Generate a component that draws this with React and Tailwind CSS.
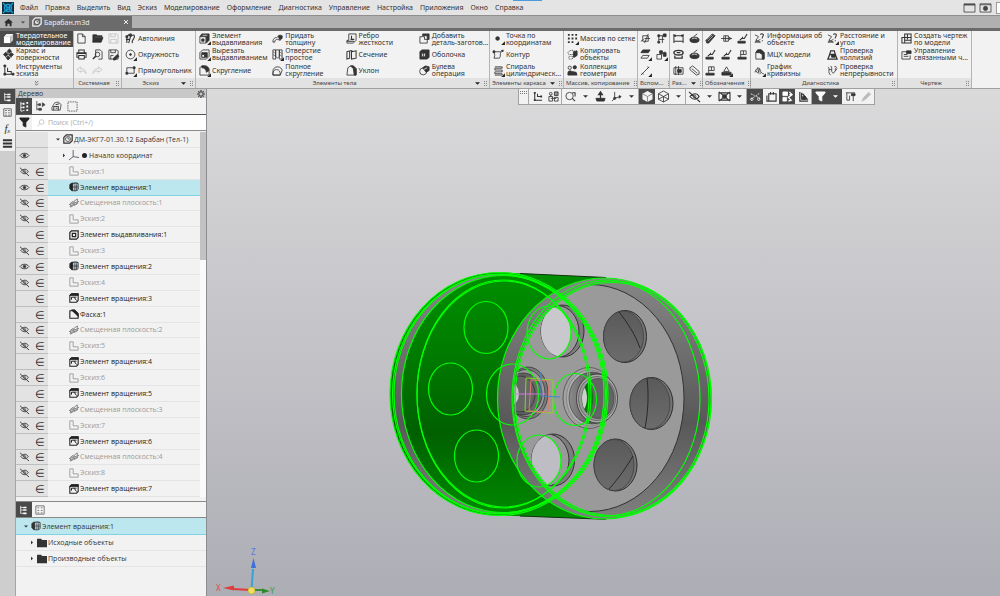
import { useState } from "react";

const glyphs = {
  solidLight: <><path d="M1 4h7v7H1z" fill="#fff" stroke="none" /><path d="M1 4l3-3h7v7l-3 3V4z" fill="#c8c8c8" stroke="none" /><path d="M1 4l3-3h7L8 4z" fill="#f0f0f0" stroke="none" /></>,
  surface: <><path d="M7 0l2.300 2.300L7 4.600 4.700 2.300zM3 3.500l2.500 2.500L3 8.500.5 6z" fill="currentColor" /><path d="M9 4l2.500 2L9 8.500 6.500 6zM5.500 7.500L8 9.500 5.500 12 3.500 9.500z" fill="currentColor" /><path d="M4 3l5 6" /></>,
  sketchTools: <><path d="M2 1v9h9M5 3v4h4v3" strokeWidth="1.100" /><path d="M1 0h2v2H1zM1 9h2v2H1zM10 9h2v2h-2z" fill="currentColor" /></>,
  file: <path d="M2 1h5l3 3v7H2zM7 1v3h3" />,
  folderOpen: <path d="M1 10V2h4l1 1h5v1H3L1 10l2-5h9l-2 5z" fill="currentColor" />,
  save: <path d="M1 1h9l1 1v9H1zM3 1v3h5V1M3 11V7h6v4" />,
  saveAs: <><path d="M1 1h9l1 1v9H1zM3 1v3h5V1M3 11V7h3" /><path d="M6 10l4-4 2 2-4 4H6z" fill="currentColor" /></>,
  print: <path d="M3 4V1h6v3M3 9H1V4h10v5H9M3 7h6v4H3zM1 5h10" strokeWidth="1.100" />,
  preview: <><path d="M4 9V1h5l2 2v8H7" /><circle cx="6" cy="6" r="2.500" /><path d="M4 8l-3 3" strokeWidth="1.600" /></>,
  undo: <path d="M5 2L1 5l4 3V6.500c3 0 5 .5 6 3C11 6 9 4 5 4z" />,
  redo: <path d="M7 2l4 3-4 3V6.500c-3 0-5 .5-6 3C1 6 3 4 7 4z" />,
  autoline: <><path d="M2 11V4l2-2 2 2-2 7M6 4c3-3 5-2 4 1s-3 3-2 6M1 7h4" strokeWidth="1.200" /><path d="M1 3h2v2H1zM5 1h2v2H5z" fill="currentColor" /></>,
  circle: <><circle cx="6" cy="6" r="4.800" /><circle cx="6" cy="6" r="1" fill="currentColor" /></>,
  rect: <><path d="M2 3h8v6H2z" /><path d="M1 8h2v2H1zM9 2h2v2H9z" fill="currentColor" /></>,
  extrude: <><path d="M1 4l2-3h8v7l-3 3V4z" fill="currentColor" /><path d="M1 4h6.500v7H1z" fill="#f4f4f4" /><path d="M3 6.500h2.500V9H3z" fill="currentColor" /><path d="M4 2.500h5" stroke="#ddd" /></>,
  cut: <><path d="M1 4l3-3h7v7l-3 3H1z" /><path d="M3 4h6v5H3z" fill="currentColor" /><path d="M3 6h3v3H3z" fill="#f4f4f4" /></>,
  fillet: <><path d="M1 11V3l2-2h3c3 0 5 2 5 5v5z" /><path d="M3 1h3c3 0 5 2 5 5l-3 2c0-3-2-5-5-5z" fill="currentColor" /></>,
  thicken: <><path d="M1 10c0-4 2-5 4-5l4-3 2 2-2 4-3-1c-2 0-3 1-3 3z" /><path d="M7 3h4v3L8 7z" fill="currentColor" /></>,
  hole: <><path d="M1 1h3v10H1zM8 1h3v10H8zM4 1h4v7l-2 2-2-2z" /><path d="M1 3l3 2M1 6l3 2M8 3l3 2M8 6l3 2" strokeWidth="0.600" /></>,
  fullFillet: <path d="M1 11V7c0-3 2-5 5-5 3 0 5 2 5 4l-2 5zM1 11c0-4 1-6 4-6s4 2 4 6z" />,
  rib: <><path d="M3 1h8v7l-3 3H1V8h2z" /><path d="M6 3v4M5 7h4M1 9h8" strokeWidth="1.200" /></>,
  section: <><path d="M1 3l3-1v8l-3 1zM6 3l5-1v8l-5 1zM4 2h3" strokeWidth="1.100" /></>,
  draft: <><path d="M1 11l1-8 3-2h3l3 3v7z" /><path d="M5 1h3l3 3v7H9L8 4z" fill="currentColor" /></>,
  addPart: <><path d="M1 4h5v3h3v4H1z" /><path d="M4 1h7v6H9V3H4z" fill="currentColor" /></>,
  shell: <><path d="M1 3l2-2h8v8l-2 2H1z" fill="currentColor" /><path d="M3 4.500h4v4H3z" fill="#f4f4f4" /><path d="M5 4.500v4" /></>,
  boolean: <><circle cx="4.500" cy="7" r="3.800" /><path d="M4 3l3-2 4 1v4L8 8 6 6z" fill="currentColor" /><path d="M5 5l4-2" stroke="#eee" /></>,
  point: <circle cx="5" cy="6" r="2" fill="currentColor" />,
  contour: <><path d="M1 3h8c-2 2 0 5-2 7H1l1-3z" /><path d="M0 2h2v2H0zM9 2l2-1v2z" fill="currentColor" /></>,
  spiral: <path d="M2 2h8v1.500H2v2h8v2H2v2h8V11H2" />,
  grid: <path d="M1 1h2v2H1zM5 1h2v2H5zM9 1h2v2H9zM1 5h2v2H1zM5 5h2v2H5zM1 9h2v2H1zM5 9h2v2H5zM9 5h2v2H9z" fill="currentColor" stroke="none" />,
  copy: <><path d="M1 4c2-3 5-3 7-2v4H2z" strokeDasharray="1.500 1" /><path d="M7 3l4-1v5l-3 2H7z" fill="currentColor" /><path d="M2 8h4v3H2z" strokeDasharray="1 1" /></>,
  collection: <><circle cx="3" cy="3" r="1.800" /><circle cx="8.500" cy="2.500" r="1.800" fill="currentColor" /><path d="M1 9c0-3 3-3 4-2l5 1 1 3H1z" fill="currentColor" /></>,
  plane: <path d="M3 9V3h6v6zM1 9l3-2M5 11L9 1M5 6h6" />,
  axes: <><path d="M3 11V3h7M3 7h6M7 3v8" /><path d="M8 1h3v3H8zM2 2h2v2H2zM2 9h2v2H2z" fill="currentColor" /></>,
  offset: <><path d="M3 7h7l-2 3H1z" /><path d="M3 1h8L9 4H1z" fill="currentColor" /></>,
  lcs: <><path d="M1 9V6h5v5H1zM6 6l4-3" /><path d="M4 2h3v3H4zM8 4h3v4H8z" fill="currentColor" /></>,
  line: <path d="M1 11L10 2M2 9l2 1M8 2l2 1" />,
  dim: <path d="M1 1v10M11 1v10M1 3h10M1 9h10M3 2l-2 1 2 1M9 2l2 1-2 1" strokeWidth="1.100" />,
  dimRound: <><ellipse cx="6" cy="4" rx="5" ry="2.500" strokeWidth="1.600" /><path d="M2 7v3h8V7M4 4h4" strokeWidth="1.400" /></>,
  dimFrame: <><path d="M3 1v10M6 1v10M1 3h10v7H1z" /><path d="M5 5h4v3H5z" fill="currentColor" /></>,
  disc: <><ellipse cx="6" cy="7.500" rx="5" ry="3" fill="currentColor" /><path d="M3 6.500c2-1 4-1 6 0" stroke="#ddd" /><path d="M5 4l4-3" /></>,
  tube: <path d="M1 3l3-2 7 6v3l-3 1-7-6zM3 4l6 5" />,
  thread: <><path d="M1 8l7-7 3 2-7 8H2z" fill="currentColor" /><path d="M3 9l6-6M2 7l6-5" stroke="#ddd" strokeWidth="0.700" /></>,
  shaft: <path d="M0 6h12M3 3h5v6H3zM8 4l3 2-3 2M5 3v6" />,
  base: <><path d="M1 9h8v2H1z" fill="currentColor" /><path d="M3 8l2-2h3l3-5M6 6V4" strokeWidth="1.200" /></>,
  base2: <><path d="M1 9h9v2H1z" fill="currentColor" /><path d="M4 9V2h6v4H4M7 2v4" /></>,
  base3: <><path d="M1 8h10v3H1z" fill="currentColor" /><path d="M3 7l3-5 3 5z" /></>,
  info: <><path d="M1 2l4 2-3 4 5 2H1l6-3" /><path d="M7 2c1-2 4-1 3 1L9 5v1M9 8v1" strokeWidth="1.100" /></>,
  mass: <><path d="M2 11V4l2-3h4l3 3v7z" /><path d="M2 4l2-3h4l3 3v7H9V6L6 4z" fill="currentColor" /></>,
  curvature: <path d="M1 8c2-6 5-6 6-2s3 3 4 4M2 6l2 3M4 3l1 5M6 4L5 9M8 8l-2 2" />,
  collision: <><path d="M4 2h4l1 4H3z" strokeWidth="1.300" /><path d="M1 11l2-5h6l2 5z" strokeWidth="1.400" /><path d="M5 6h4v3H5z" fill="currentColor" /></>,
  continuity: <><path d="M1 2c3 2-1 6 3 9M4 1c3 3-1 6 3 8l4-5M2 5h3" /><path d="M8 2c1-1 3 0 2 1L9 5v1" /></>,
  drawing: <path d="M1 5h3V1h7v10H1zM4 5h7M4 5v6M7 1v6M4 8h7" strokeWidth="1.100" />,
  drawings: <><path d="M1 3h5M1 3v8h9V7M3 6h4M3 8h5" /><path d="M6 2h5v3H6z" fill="currentColor" /></>,
  tree: <><path d="M2 1v9M2 3h3M2 6h3M2 10h3" /><path d="M5 2h4v2H5zM5 5h4v2H5zM5 9h4v2H5z" fill="currentColor" stroke="none" /></>,
  treeDots: <><path d="M2 1v10M2 3h2M2 7h2M2 11h2" /><path d="M4 2h2v2H4zM4 6h2v2H4zM8 1h2v2H8zM8 5h2v2H8zM8 9h2v2H8zM4 10h2v1H4z" fill="currentColor" stroke="none" /></>,
  treeArrow: <><path d="M2 0v10M2 4h2M2 9h2" /><path d="M4 3h2v2H4zM4 8h3v2H4zM8 2l3 2-3 2z" fill="currentColor" /></>,
  bodies: <><path d="M1 7l3-5 4-1 3 3-1 6H1z" /><path d="M5 4l4-1M3 10V6h5v4M5 8h2" strokeWidth="1.100" /></>,
  dashed: <path d="M1 1h10v10H1z" strokeDasharray="1.500 1" />,
  params: <><path d="M1 1h10v10H1z" /><path d="M3 3h2v1H3zM7 3h2v1H7zM3 6h2v1H3zM7 6h2v1H7zM3 9h2v1H3zM7 9h2v1H7z" fill="currentColor" stroke="none" /></>,
  list: <path d="M1 2.500h10M1 6h10M1 9.500h10" strokeWidth="2.200" />,
  funnel: <path d="M1 1h10v1L7.500 6v5l-3-1.500V6L1 2z" fill="currentColor" />,
  search: <path d="M7 1a3.500 3.500 0 1 1-.1 7 3.500 3.500 0 1 1 .1-7zM4 7l-3 4" />,
  gear: <><circle cx="6" cy="6" r="3.300" strokeWidth="1.500" /><path d="M6 0v2M6 10v2M0 6h2M10 6h2M2 2l1.300 1.300M8.700 8.700L10 10M2 10l1.300-1.300M8.700 3.300L10 2" strokeWidth="1.800" /></>,
  part: <><path d="M1 4l3-3h7v7l-3 3H1z" strokeWidth="1.500" /><circle cx="6" cy="6" r="3" fill="#f4f4f4" stroke="#333" /><path d="M6 4v2h2" stroke="#333" /></>,
  origin: <path d="M5 0v8l7 1M5 8l-5 4" stroke="#3d3346" />,
  sketch: <path d="M1 1h4v6h6v4H1z" />,
  revolve: <><path d="M4 2c2-1 6-1 7 0v7c-1 2-5 2-7 1z" fill="#a9c3d2" /><path d="M1 3l3-2v10L1 8z" fill="currentColor" /><path d="M4 2c2-1 5-1 7 0M7 3v8M9 3v7M4 6h7" strokeWidth="0.700" /></>,
  cutRevolve: <><path d="M1 3l2-2h8v8l-2 2H1z" strokeWidth="1.300" /><path d="M1 3l2-2h8v2z" fill="currentColor" /><path d="M3 8V5h3l3 4M6 5h3" strokeWidth="1.200" /></>,
  cutExtrude: <><path d="M1 3l2-2h8v8l-2 2H1z" strokeWidth="1.400" /><path d="M4 4h4v4H4z" strokeWidth="1.500" /></>,
  chamfer: <><path d="M1 11V2h3l7 5v4z" strokeWidth="1.300" /><path d="M3 1h4l4 4v4z" fill="currentColor" /></>,
  offsetPlane: <path d="M2 11V6l3-2v5zM6 9V4l4-3v6zM0 8l12-4M1 10l10-4" strokeWidth="1.200" />,
  folder: <path d="M0 1h5l1 1.500h6V11H0z" fill="currentColor" stroke="none" />,
  eye: <><path d="M0 6c3-4 9-4 12 0-3 4-9 4-12 0z" strokeWidth="1.200" /><circle cx="6" cy="6" r="1.700" fill="currentColor" /></>,
  eyeOff: <><path d="M1 6c3-4 8-4 10 0-2 4-7 4-10 0zM0 1l12 11" strokeWidth="1.200" /><circle cx="6" cy="6" r="1.500" /></>,
  home: <path d="M0 6l6-5 6 5H10v5H7.500V7.500h-3V11H2V6z" fill="currentColor" stroke="none" />,
  window: <><path d="M0 2h12v9H0z" /><path d="M0 3h12" strokeWidth="1.500" /></>,
  windowGear: <><path d="M0 2h12v9H0zM0 3h12" /><circle cx="6" cy="7" r="2.300" fill="currentColor" /></>,
  axis: <><path d="M3 1v9h8M6 3v3h4" strokeWidth="1.100" /><path d="M2 1h2v2H2zM2 9h2v2H2zM9 5h2v2H9z" fill="currentColor" stroke="none" /></>,
  blocks: <><path d="M1 6h4v5H1zM7 7h4v4H7zM3 8h6M3 4v2" /><path d="M7 1h4v4H7z" fill="currentColor" fillOpacity="0.5" /><circle cx="3" cy="3" r="1.500" /></>,
  zoomRect: <><circle cx="5" cy="5.500" r="4" /><path d="M8 8l3 3M8 2h3v4" strokeWidth="1.100" /></>,
  orient: <><path d="M1 8h10l-1 3H2z" fill="currentColor" /><path d="M6 8V2M4 4l2-3 2 3z" strokeWidth="1.400" /></>,
  triad: <><path d="M4 1v7l-3 3M4 8l6-2" /><circle cx="4" cy="8" r="1.200" fill="currentColor" /><path d="M9 5l2 1-2 2z" fill="currentColor" /></>,
  cube: <><path d="M6 0l5.500 3v6L6 12 .5 9V3z" fill="#f2f2f2" stroke="none" /><path d="M.5 3L6 6l5.500-3M6 6v6" stroke="#777" /></>,
  cubeWire: <path d="M6 0l5.500 3v6L6 12 .5 9V3zM.5 3L6 6l5.500-3M6 6v6M.5 9L6 6l5.500 3" />,
  cameraOff: <><path d="M0 2h12v8H0zM0 1l12 10M12 1L0 11" strokeWidth="1.200" /><circle cx="6" cy="6" r="2.200" fill="currentColor" /></>,
  cutLine: <><path d="M1 3l4 2M7 6l4 2M1 9l10-7" strokeDasharray="2 1" /><circle cx="2" cy="9" r="1.300" /><circle cx="9.500" cy="9" r="1.300" /></>,
  boxes: <path d="M3 3h8v8H3zM1 5v6h2M5 1v3M8 1v3M5 3h3" strokeWidth="1.200" />,
  repaint: <><path d="M1 1h5v4H1zM1 7h4v4H1z" fill="currentColor" /><path d="M8 1l3 3-4 3 3 3-3 1M8 4h3" strokeWidth="1.400" /></>,
  measure: <><path d="M2 1v10h9M4 2v7h6L5 3" strokeWidth="1.300" /><path d="M5 6h3v3H5z" fill="currentColor" /></>,
  caliper: <><path d="M1 2h10M2 2v8h3V5M9 4v7" /><path d="M7 3h4v2H7z" fill="currentColor" /></>,
  brush: <path d="M1 11l2-4 5-5 2 2-5 5zM8 1l3 3" fill="currentColor" />,
};

function Icon({ name, className = "size-[11px]", more }) {
  return (
    <svg viewBox="0 0 12 12" className={`shrink-0 overflow-visible ${className}`} fill="none" stroke="currentColor" strokeWidth="0.900" aria-hidden="true">
      {glyphs[name]}
      {more ? <path d="M13 9v4H9z" fill="#222" stroke="none" /> : null}
    </svg>
  );
}

function Caret({ className = "w-[5px]" }) {
  return (
    <svg viewBox="0 0 6 3" className={`h-[3px] shrink-0 ${className}`} aria-hidden="true">
      <path d="M0 0h6L3 3z" fill="currentColor" />
    </svg>
  );
}

const menuItems = ["Файл", "Правка", "Выделить", "Вид", "Эскиз", "Моделирование", "Оформление", "Диагностика", "Управление", "Настройка", "Приложения", "Окно", "Справка"];

const modes = [
  { icon: "solidLight", lines: ["Твердотельное", "моделирование"], active: true },
  { icon: "surface", lines: ["Каркас и", "поверхности"] },
  { icon: "sketchTools", lines: ["Инструменты", "эскиза"] },
];

// columns are filled top to bottom, three commands each
const ribbonGroups = [
  {
    title: "Системная",
    cols: "grid-cols-3",
    small: true,
    items: ["file", "print", "undo", "folderOpen", "preview", "redo", "save", "saveAs"],
    dim: ["undo", "redo", "save"],
  },
  {
    title: "Эскиз",
    caret: true,
    cols: "grid-cols-1",
    items: [
      { icon: "autoline", lines: ["Автолиния"] },
      { icon: "circle", lines: ["Окружность"], more: true },
      { icon: "rect", lines: ["Прямоугольник"], more: true },
    ],
  },
  {
    title: "Элементы тела",
    caret: true,
    cols: "grid-cols-4",
    items: [
      { icon: "extrude", lines: ["Элемент", "выдавливания"], more: true },
      { icon: "cut", lines: ["Вырезать", "выдавливанием"], more: true },
      { icon: "fillet", lines: ["Скругление"], more: true },
      { icon: "thicken", lines: ["Придать", "толщину"] },
      { icon: "hole", lines: ["Отверстие", "простое"], more: true },
      { icon: "fullFillet", lines: ["Полное", "скругление"] },
      { icon: "rib", lines: ["Ребро", "жесткости"] },
      { icon: "section", lines: ["Сечение"] },
      { icon: "draft", lines: ["Уклон"] },
      { icon: "addPart", lines: ["Добавить", "деталь-заготов..."] },
      { icon: "shell", lines: ["Оболочка"] },
      { icon: "boolean", lines: ["Булева", "операция"] },
    ],
  },
  {
    title: "Элементы каркаса",
    caret: true,
    cols: "grid-cols-1",
    items: [
      { icon: "point", lines: ["Точка по", "координатам"], more: true },
      { icon: "contour", lines: ["Контур"] },
      { icon: "spiral", lines: ["Спираль", "цилиндрическ..."], more: true },
    ],
  },
  {
    title: "Массив, копирование",
    cols: "grid-cols-1",
    items: [
      { icon: "grid", lines: ["Массив по сетке"], more: true },
      { icon: "copy", lines: ["Копировать", "объекты"] },
      { icon: "collection", lines: ["Коллекция", "геометрии"] },
    ],
  },
  { title: "Вспом...", cols: "grid-cols-2", small: true, items: ["plane", "offset", "line", "axes", "lcs"], dim: [], more: ["offset", "line", "lcs"] },
  { title: "Раз...", caret: true, cols: "grid-cols-2", small: true, items: ["dim", "dimRound", "dimFrame", "disc", "disc", "tube"], dim: [] },
  {
    title: "Обозначения",
    cols: "grid-cols-3",
    small: true,
    items: ["thread", "base", "base2", "shaft", "base", "base3", "base", "base2"],
    dim: [],
    more: ["base3"],
  },
  {
    title: "Диагностика",
    cols: "grid-cols-2",
    items: [
      { icon: "info", lines: ["Информация об", "объекте"] },
      { icon: "mass", lines: ["МЦХ модели"] },
      { icon: "curvature", lines: ["График", "кривизны"], more: true },
      { icon: "info", lines: ["Расстояние и", "угол"], more: true },
      { icon: "collision", lines: ["Проверка", "коллизий"] },
      { icon: "continuity", lines: ["Проверка", "непрерывности"] },
    ],
  },
  {
    title: "Чертеж",
    cols: "grid-cols-1",
    items: [
      { icon: "drawing", lines: ["Создать чертеж", "по модели"] },
      { icon: "drawings", lines: ["Управление", "связанными ч..."] },
    ],
  },
];

const treeRows = [
  { icon: "sketch", label: "Эскиз:1", eye: "eyeOff" },
  { icon: "revolve", label: "Элемент вращения:1", eye: "eye" },
  { icon: "offsetPlane", label: "Смещенная плоскость:1", eye: "eyeOff" },
  { icon: "sketch", label: "Эскиз:2", eye: "eyeOff" },
  { icon: "cutExtrude", label: "Элемент выдавливания:1" },
  { icon: "sketch", label: "Эскиз:3", eye: "eyeOff" },
  { icon: "revolve", label: "Элемент вращения:2", eye: "eye" },
  { icon: "sketch", label: "Эскиз:4", eye: "eyeOff" },
  { icon: "cutRevolve", label: "Элемент вращения:3" },
  { icon: "chamfer", label: "Фаска:1" },
  { icon: "offsetPlane", label: "Смещенная плоскость:2", eye: "eyeOff" },
  { icon: "sketch", label: "Эскиз:5", eye: "eyeOff" },
  { icon: "cutRevolve", label: "Элемент вращения:4" },
  { icon: "sketch", label: "Эскиз:6", eye: "eyeOff" },
  { icon: "cutRevolve", label: "Элемент вращения:5" },
  { icon: "offsetPlane", label: "Смещенная плоскость:3", eye: "eyeOff" },
  { icon: "sketch", label: "Эскиз:7", eye: "eyeOff" },
  { icon: "cutRevolve", label: "Элемент вращения:6" },
  { icon: "offsetPlane", label: "Смещенная плоскость:4", eye: "eyeOff" },
  { icon: "sketch", label: "Эскиз:8", eye: "eyeOff" },
  { icon: "cutRevolve", label: "Элемент вращения:7" },
];

const viewTools = [
  [{ icon: "axis" }, { icon: "blocks" }],
  [{ icon: "zoomRect", caret: true }, { icon: "orient" }, { icon: "triad", caret: true }],
  [{ icon: "cube", active: true }, { icon: "cubeWire", caret: true }],
  [{ icon: "eyeOff", caret: true }, { icon: "cameraOff", caret: true }],
  [{ icon: "cutLine", active: true }, { icon: "boxes" }, { icon: "repaint", active: true }, { icon: "measure" }],
  [{ icon: "funnel", active: true, caret: true }, { icon: "caliper" }, { icon: "brush", dim: true }],
];

function MenuBar() {
  return (
    <header className="relative flex h-4 items-center border-b border-[#8f8f8f] bg-[#e4e4e4] pl-[2px]">
      <svg viewBox="0 0 12 12" className="size-3 shrink-0" fill="none" aria-hidden="true">
        <path d="M0 0h12v12H0z" fill="#12303f" />
        <circle cx="6" cy="6" r="3.500" stroke="#1ba0d8" strokeWidth="1.300" />
        <path d="M1 1l4 4M11 1L7 5M1 11l4-4M11 11L7 7M5 5v3l3-2z" stroke="#1ba0d8" strokeWidth="1.200" />
      </svg>
      <nav className="ml-[6px] flex gap-[7px]">
        {menuItems.map((item) => (
          <button key={item} type="button">{item}</button>
        ))}
      </nav>
      <div className="ml-auto flex items-center gap-[5px] text-[#444]">
        <button type="button" aria-label="Окно"><Icon name="window" /></button>
        <button type="button" aria-label="Настройка окна"><Icon name="windowGear" /></button>
        <span className="h-3 w-1 border border-r-0 border-[#999] bg-white" />
      </div>
      <span className="absolute left-[513px] top-0 h-px w-[29px] bg-[#4a9ade]" />
    </header>
  );
}

function DocumentTabs() {
  return (
    <div className="flex h-[15px] items-stretch border-b-[3px] border-[#6b6b6b] bg-[#b0b0b0]">
      <button type="button" aria-label="Главная" className="flex w-4 items-center justify-center text-[#2c2c2c]">
        <Icon name="home" className="size-[9px]" />
      </button>
      <button type="button" aria-label="Список документов" className="flex w-[13px] items-center justify-center text-[#444]">
        <Caret className="w-1" />
      </button>
      <div className="flex w-[103px] items-center gap-[2px] bg-[#6b6b6b] px-[3px] text-[#f0f0f0]">
        <Icon name="part" className="size-[10px]" />
        <span>Барабан.m3d</span>
        <button type="button" aria-label="Закрыть" className="ml-auto">
          <svg viewBox="0 0 6 6" className="size-[6px]" stroke="currentColor"><path d="M1 1l4 4M5 1L1 5" /></svg>
        </button>
      </div>
    </div>
  );
}

function Command({ icon, lines, more, active }) {
  return (
    <button
      type="button"
      className={`flex min-w-0 items-center gap-[2px] pl-[3px] text-left leading-[7px] ${active ? "bg-[#4a4a4a] text-white" : "text-[#333]"}`}
    >
      <Icon name={icon} more={more} />
      <span className="whitespace-nowrap">
        {lines.map((line) => (
          <span key={line} className="block">{line}</span>
        ))}
      </span>
    </button>
  );
}

function Grip() {
  return (
    <svg viewBox="0 0 3 5" className="h-[5px] w-[3px] shrink-0" fill="#888" aria-hidden="true">
      <path d="M0 0h1v1H0zM2 0h1v1H2zM0 2h1v1H0zM2 2h1v1H2zM0 4h1v1H0zM2 4h1v1H2z" />
    </svg>
  );
}

function RibbonGroup({ group }) {
  return (
    <section className="flex min-w-0 flex-col border-r border-[#b4b4b4]">
      <div className={`grid h-[47px] grid-flow-col grid-rows-3 ${group.cols}`}>
        {group.items.map((item, index) =>
          group.small ? (
            <button
              key={index}
              type="button"
              aria-label={`${group.title} ${index + 1}`}
              className={`flex items-center justify-center ${group.dim.includes(item) ? "text-[#c4c4c4]" : "text-[#333]"}`}
            >
              <Icon name={item} more={group.more?.includes(item)} />
            </button>
          ) : (
            <Command key={index} {...item} />
          )
        )}
      </div>
      <div className="flex h-[10px] items-center gap-1 bg-[#e2e2e2] px-[2px] text-[6px] text-[#444]">
        <span className="flex-1 whitespace-nowrap text-center">{group.title}</span>
        {group.caret ? <Caret className="w-[5px] text-[#222]" /> : null}
        <Grip />
      </div>
    </section>
  );
}

function Ribbon() {
  return (
    <div className="grid grid-cols-[74fr_48fr_74fr_294fr_74fr_74fr_32fr_33fr_48fr_147fr_74fr_28fr] border-b border-[#a0a0a0] bg-[#f2f2f2]">
      <section className="min-w-0 border-r border-[#b4b4b4]">
        <div className="grid h-[47px] grid-rows-3">
          {modes.map((mode) => (
            <Command key={mode.icon} {...mode} />
          ))}
        </div>
        <button type="button" aria-label="Еще" className="flex h-[10px] w-full items-center justify-center bg-[#e2e2e2]">
          <svg viewBox="0 0 6 6" className="size-[5px]" fill="none" stroke="#555"><path d="M1 0l2 2 2-2M1 3l2 2 2-2" /></svg>
        </button>
      </section>
      {ribbonGroups.map((group) => (
        <RibbonGroup key={group.title} group={group} />
      ))}
    </div>
  );
}

function SideStrip() {
  return (
    <aside className="w-4 shrink-0 border-r border-[#a4a4a4] bg-[#cecece]">
      <button type="button" aria-label="Дерево" className="flex h-[15px] w-full items-center justify-center bg-[#4a4a4a] text-white">
        <Icon name="tree" className="size-[10px]" />
      </button>
      <div className="bg-[#f0f0f0] text-[#333]">
        <button type="button" aria-label="Параметры" className="flex h-4 w-full items-center justify-center"><Icon name="params" className="size-[9px]" /></button>
        <button type="button" aria-label="Переменные" className="flex h-4 w-full items-center justify-center text-[11px] italic">
          <span className="font-['Liberation_Serif',serif]">fₓ</span>
        </button>
        <button type="button" aria-label="Слои" className="flex h-[15px] w-full items-center justify-center"><Icon name="list" /></button>
      </div>
    </aside>
  );
}

function TreeRow({ eye, element, selected, onClick, children }) {
  return (
    <li className="flex min-h-[14px] flex-1" role="treeitem" aria-selected={Boolean(selected)}>
      <div className="flex w-8 shrink-0 border-b border-[#bdbdbd] bg-[#e3e3e3] text-[#333]">
        <span className="flex w-4 items-center justify-center">
          {eye ? <button type="button" aria-label="Видимость"><Icon name={eye} className="size-[9px]" /></button> : null}
        </span>
        <span className="flex w-4 items-center justify-center text-[11px] leading-none">{element ? "∈" : ""}</span>
      </div>
      <button
        type="button"
        onClick={onClick}
        className={`flex min-w-0 flex-1 items-center whitespace-nowrap border-b text-left ${selected ? "border-[#7fd3e2] bg-[#bce7ee]" : "border-[#e4e4e4]"}`}
      >
        {children}
      </button>
    </li>
  );
}

function TreePanel() {
  const [selected, setSelected] = useState("Элемент вращения:1");
  const [query, setQuery] = useState("");

  return (
    <aside className="flex w-[191px] shrink-0 flex-col border-r border-[#8c8c92] bg-[#f2f2f2] font-['Open_Sans','Noto_Sans',sans-serif]">
      <div className="flex h-[9px] items-center justify-between bg-[#c8c8c8] pl-[2px] pr-px leading-none">
        <h2>Дерево</h2>
        <button type="button" aria-label="Настройка дерева"><Icon name="gear" className="size-[8px]" /></button>
      </div>
      <div className="flex h-[17px] border-b border-[#555]">
        {["treeDots", "treeArrow", "bodies", "dashed"].map((icon, index) => (
          <button
            key={icon}
            type="button"
            aria-label={`Режим дерева ${index + 1}`}
            className={`flex w-4 items-center justify-center ${index === 0 ? "bg-[#4a4a4a] text-white" : "text-[#444]"}`}
          >
            <Icon name={icon} />
          </button>
        ))}
      </div>
      <div className="flex h-4 items-center border-b border-[#8a8a8a] bg-white">
        <button type="button" aria-label="Фильтр" className="flex h-full w-4 items-center justify-center bg-[#f0f0f0] text-[#222]">
          <Icon name="funnel" />
        </button>
        <label className="ml-[5px] flex flex-1 items-center gap-[3px] text-[#aaa]">
          <Icon name="search" className="size-[8px]" />
          <input
            value={query}
            onChange={(event) => setQuery(event.target.value)}
            placeholder="Поиск (Ctrl+/)"
            aria-label="Поиск"
            className="w-full bg-transparent outline-none placeholder:text-[#aaa]"
          />
        </label>
      </div>
      <div className="flex flex-1 pt-px">
        <ul role="tree" className="flex min-w-0 flex-1 flex-col">
          <TreeRow>
            <Caret className="ml-2 w-1" />
            <Icon name="part" className="ml-[3px] size-[10px]" />
            <span className="ml-px">ДМ-ЭКГ7-01.30.12 Барабан (Тел-1)</span>
          </TreeRow>
          <TreeRow eye="eye">
            <Caret className="ml-[14px] w-1 -rotate-90" />
            <Icon name="origin" className="ml-[3px] size-[10px]" />
            <span className="ml-[3px] mr-[2px] size-[5px] rounded-full bg-[#222]" />
            <span>Начало координат</span>
          </TreeRow>
          {treeRows.map((row) => {
            const muted = row.icon === "sketch" || row.icon === "offsetPlane";
            return (
              <TreeRow key={row.label} eye={row.eye} element selected={selected === row.label} onClick={() => setSelected(row.label)}>
                <Icon name={row.icon} className={`ml-[21px] size-[10px] ${muted ? "text-[#8a8a8a]" : "text-[#222]"}`} />
                <span className={`ml-px ${muted ? "text-[#999]" : "text-[#222]"}`}>{row.label}</span>
              </TreeRow>
            );
          })}
        </ul>
        <div className="w-[6px] bg-[#fafafa]">
          <div className="h-[35%] bg-[#c2c2c2]" />
        </div>
      </div>
      <div className="mt-1 flex h-[17px] border-y border-[#888] bg-[#f4f4f4]">
        <button type="button" aria-label="Состав" className="flex w-4 items-center justify-center bg-[#4a4a4a] text-white"><Icon name="tree" className="size-[10px]" /></button>
        <button type="button" aria-label="Свойства" className="flex w-4 items-center justify-center text-[#555]"><Icon name="params" className="size-[10px]" /></button>
      </div>
      <ul role="tree" className="h-[78px]">
        <li role="treeitem" className="flex h-[17px] items-center border-b border-[#7fd3e2] bg-[#bce7ee] pl-2">
          <Caret className="w-1" />
          <Icon name="revolve" className="ml-[3px] size-[10px]" />
          <span className="ml-px">{selected}</span>
        </li>
        {["Исходные объекты", "Производные объекты"].map((label) => (
          <li key={label} role="treeitem" className="flex h-4 items-center border-b border-[#e4e4e4] pl-[14px]">
            <Caret className="w-1 -rotate-90" />
            <Icon name="folder" className="ml-[3px] size-[10px]" />
            <span className="ml-px">{label}</span>
          </li>
        ))}
      </ul>
    </aside>
  );
}

function ViewToolbar() {
  return (
    <div role="toolbar" className="absolute left-[311px] top-0 flex h-4 border border-t-0 border-[#a0a0a0] bg-[#f2f2f2] text-[#333]">
      <span className="flex w-[9px] justify-center pt-[2px]">
        <svg viewBox="0 0 7 3" className="h-[3px] w-[7px]" fill="#777"><path d="M0 0h1v1H0zM2 0h1v1H2zM4 0h1v1H4zM6 0h1v1H6zM0 2h1v1H0zM2 2h1v1H2zM4 2h1v1H4zM6 2h1v1H6z" /></svg>
      </span>
      {viewTools.map((group, groupIndex) => (
        <div key={groupIndex} className="flex border-l border-[#a8a8a8]">
          {group.map((tool) => (
            <button
              key={tool.icon}
              type="button"
              aria-label={tool.icon}
              className={`flex items-center ${tool.active ? "bg-[#4a4a4a] text-white" : ""} ${tool.dim ? "text-[#bbb]" : ""}`}
            >
              <span className="flex w-4 justify-center"><Icon name={tool.icon} /></span>
              {tool.caret ? <span className="flex w-[14px] justify-center"><Caret /></span> : null}
            </button>
          ))}
        </div>
      ))}
    </div>
  );
}

// outlines of the selected revolve: back flange, bores, front flange
const highlighted = [
  [499, 394, 109, 121.5],
  [499.5, 394, 107, 120],
  [499, 394, 105, 119.5],
  [503.5, 394, 102, 118.5],
  [503, 394, 86, 114],
  [504, 394, 87, 113],
  [486, 327.5, 22, 26],
  [450.5, 389, 22, 26],
  [476.5, 456, 22, 26],
  [512.5, 394.5, 26, 30.5],
  [575, 399.5, 21.5, 26],
  [549, 332.5, 22, 26.5],
  [539, 461, 22, 26],
  [604.5, 398.5, 107, 120.5],
  [612, 399, 99, 118],
  [612, 399, 97, 116.5],
  [606, 398, 94, 118],
];

const bores = [
  { cx: 625, cy: 336.5, cut: "M619 312c8 10 16 22 21 36" },
  { cx: 651.5, cy: 403.5, cut: "M647 378c2 18 1 34-2 50" },
  { cx: 615.5, cy: 465, cut: "M633 456c-6 10-14 22-24 33" },
];

function DrumModel() {
  return (
    <svg viewBox="207 89 793 507" className="absolute inset-0 size-full" fill="none" aria-label="Модель барабана">
      <defs>
        <linearGradient id="body" x1="0" y1="272" x2="0" y2="516" gradientUnits="userSpaceOnUse">
          <stop offset="0" stopColor="#009000" />
          <stop offset="0.350" stopColor="#007a00" />
          <stop offset="0.660" stopColor="#006000" />
          <stop offset="1" stopColor="#008a00" />
        </linearGradient>
        <linearGradient id="rim" x1="0" y1="278" x2="0" y2="519" gradientUnits="userSpaceOnUse">
          <stop offset="0" stopColor="#868686" />
          <stop offset="0.600" stopColor="#585858" />
          <stop offset="1" stopColor="#808080" />
        </linearGradient>
        <linearGradient id="bore" x1="0" y1="0" x2="0" y2="1">
          <stop offset="0" stopColor="#5a5a5a" />
          <stop offset="1" stopColor="#6c6c6c" />
        </linearGradient>
        <linearGradient id="steel" x1="0" y1="0" x2="1" y2="0">
          <stop offset="0" stopColor="#8a8a8a" />
          <stop offset="0.500" stopColor="#5c5c5c" />
          <stop offset="1" stopColor="#707070" />
        </linearGradient>
        <clipPath id="opening"><ellipse cx="612" cy="399" rx="98" ry="117" /></clipPath>
        <clipPath id="upperBore"><ellipse cx="562.500" cy="331" rx="21.500" ry="26" /></clipPath>
        <clipPath id="lowerBore"><ellipse cx="553" cy="460" rx="21.500" ry="26" /></clipPath>
        <clipPath id="hubBore"><ellipse cx="598" cy="398.500" rx="16" ry="20" /></clipPath>
      </defs>

      <ellipse cx="499" cy="394" rx="109" ry="121.500" fill="url(#body)" />
      <path d="M503 272.500L606 277.500V519.200L503 515.500z" fill="url(#body)" />
      <path d="M520 273.500L606 277.500M520 516L606 519.300" stroke="#123312" />
      <ellipse cx="499" cy="394" rx="105" ry="119.500" fill="url(#rim)" />
      <ellipse cx="503.500" cy="394" rx="102" ry="118.500" fill="url(#body)" />

      <ellipse cx="604.500" cy="398.500" rx="107" ry="120.500" fill="url(#rim)" />
      <g clipPath="url(#opening)">
        <ellipse cx="590" cy="398" rx="94" ry="113.500" fill="#9a9a9a" stroke="#333" />

        <g stroke="#2c2c2c" strokeWidth="0.700">
          <ellipse cx="528" cy="393" rx="20" ry="26" fill="#7a7a7a" />
          <ellipse cx="526" cy="393" rx="19" ry="23.500" fill="#9a9a9a" />
          <ellipse cx="523" cy="394" rx="19" ry="21" fill="url(#steel)" />
          <ellipse cx="520" cy="394" rx="15" ry="18" fill="#666" />
          <ellipse cx="509" cy="394" rx="10" ry="12" fill="#c6c6cb" stroke="none" />
        </g>

        <ellipse cx="562.500" cy="331" rx="21.500" ry="26" fill="#7c7c7c" stroke="#333" />
        <g clipPath="url(#upperBore)">
          <ellipse cx="557" cy="331.500" rx="22" ry="26" fill="#999" stroke="#333" />
          <ellipse cx="549" cy="332.500" rx="22" ry="26.500" fill="#c9c9cd" />
        </g>
        <ellipse cx="553" cy="460" rx="21.500" ry="26" fill="#7c7c7c" stroke="#333" />
        <g clipPath="url(#lowerBore)">
          <ellipse cx="547" cy="460" rx="22" ry="26" fill="#999" stroke="#333" />
          <ellipse cx="539" cy="461" rx="22" ry="26" fill="#bdbdc3" />
        </g>

        {bores.map((bore) => (
          <g key={bore.cx} stroke="#222" strokeWidth="0.900">
            <ellipse cx={bore.cx} cy={bore.cy} rx="21.500" ry="26" fill="#757575" />
            <ellipse cx={bore.cx - 1.5} cy={bore.cy} rx="20" ry="25.500" fill="url(#bore)" stroke="#444" />
            <path d={bore.cut} />
          </g>
        ))}

        <g stroke="#444" strokeWidth="0.700">
          <ellipse cx="589" cy="398" rx="26" ry="30.500" fill="#a2a2a2" />
          <ellipse cx="590" cy="398" rx="23.500" ry="28" fill="#b0b0b0" stroke="#777" />
          <ellipse cx="592" cy="398" rx="23" ry="26" fill="url(#steel)" />
          <ellipse cx="597" cy="398.500" rx="20.500" ry="24.500" fill="#a8a8a8" stroke="#222" />
          <ellipse cx="597" cy="398.500" rx="18.500" ry="22" fill="#999" stroke="#555" />
          <ellipse cx="598" cy="398.500" rx="16" ry="20" fill="#646464" />
        </g>
        <g clipPath="url(#hubBore)">
          <ellipse cx="583" cy="398" rx="10" ry="18" fill="#007a00" />
          <ellipse cx="577" cy="398" rx="10" ry="16" fill="#cfcfd2" />
        </g>
      </g>

      <g stroke="#00ff00" strokeWidth="1.200">
        {highlighted.map(([cx, cy, rx, ry], index) => (
          <ellipse key={index} cx={cx} cy={cy} rx={rx} ry={ry} />
        ))}
      </g>

      <g strokeWidth="1">
        <path d="M526 378l27 2v33l-28-2z" stroke="#8ad433" />
        <path d="M531 380l18 1-1 31-19-1z" stroke="#e07a70" />
        <path d="M516 394h30" stroke="#c77bd0" />
        <path d="M541 372v24l19 1" stroke="#3f86d8" />
      </g>

      <g strokeWidth="2">
        <path d="M251.500 590L253 569" stroke="#35a3d8" />
        <path d="M251 590l-18-1" stroke="#e03c3c" />
        <path d="M251 590h12" stroke="#3d8a3d" />
      </g>
      <path d="M253.500 558l2.500 10h-5z" fill="#3f6fd8" />
      <path d="M223 588l11-2.500v5z" fill="#e03c3c" />
      <path d="M270 591l-8-2.500v5z" fill="#2f8a2f" />
      <circle cx="251.500" cy="590.500" r="3.500" fill="#f0e05a" stroke="#b09a20" strokeWidth="0.500" />
      <text x="251" y="555" fontSize="8" fill="#5478e0">Z</text>
      <text x="216" y="591" fontSize="8" fill="#e04848">X</text>
      <text x="270" y="594" fontSize="8" fill="#35a045">Y</text>
    </svg>
  );
}

export default function App() {
  return (
    <div className="flex h-screen min-h-[540px] flex-col overflow-hidden bg-[#cecece] font-['Noto_Sans','Open_Sans',sans-serif] text-[7px] leading-[9px] text-[#333]">
      <MenuBar />
      <DocumentTabs />
      <Ribbon />
      <div className="flex min-h-0 flex-1">
        <SideStrip />
        <TreePanel />
        <main className="relative min-w-0 flex-1 bg-linear-to-b from-[#dadadb] to-[#adadb5]">
          <DrumModel />
          <ViewToolbar />
        </main>
      </div>
    </div>
  );
}
